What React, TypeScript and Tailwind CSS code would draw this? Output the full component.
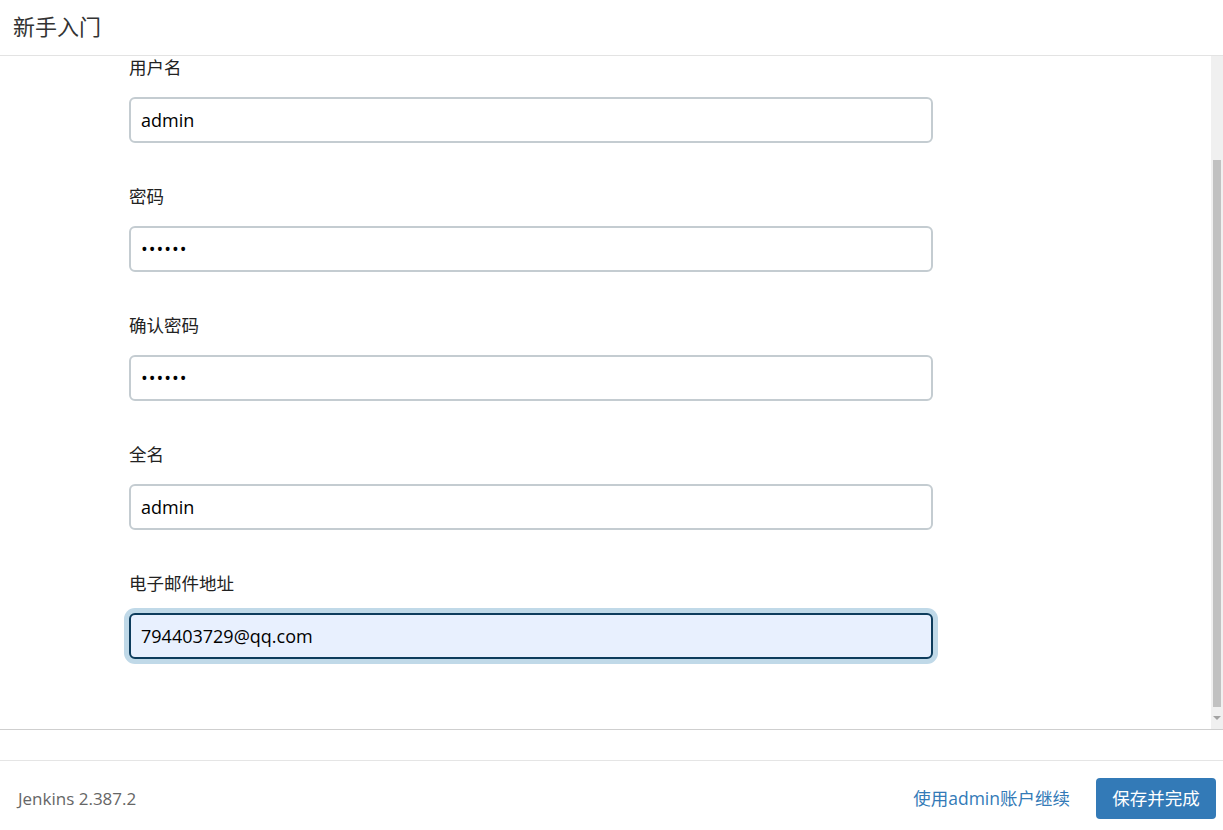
import React from "react";

const fields = [
  { label: "用户名", value: "admin", type: "text" },
  { label: "密码", value: "••••••", type: "password" },
  { label: "确认密码", value: "••••••", type: "password" },
  { label: "全名", value: "admin", type: "text" },
  { label: "电子邮件地址", value: "794403729@qq.com", type: "email", focused: true },
];

const font = "font-['Segoe_UI','Open_Sans','Noto_Sans_CJK_SC',sans-serif]";

const Field = ({
  label,
  value,
  type,
  focused,
}: {
  label: string;
  value: string;
  type: string;
  focused?: boolean;
}) => {
  return (
    <div className="mb-[42px]">
      <div className="text-[17.5px] leading-[22px] text-[#222] mb-[19px]">{label}</div>
      <div
        className={
          focused
            ? "w-[804px] h-[46px] rounded-[6px] border-2 border-[#0d3c5c] bg-[#e8f0fe] flex items-center px-[10px] shadow-[0_0_0_5px_#c0d9e8]"
            : "w-[804px] h-[46px] rounded-[6px] border-2 border-[#c4ccd1] bg-white flex items-center px-[10px]"
        }
      >
        {type === "password" ? (
          <span className="text-[18px] text-black tracking-[1px] leading-none">{value}</span>
        ) : (
          <span className="text-[18px] text-black">{value}</span>
        )}
      </div>
    </div>
  );
};

export default function App() {
  return (
    <div className={`w-[1223px] h-[830px] bg-white flex flex-col overflow-hidden ${font}`}>
      <div className="h-[56px] shrink-0 border-b border-[#e3e3e3] flex items-center pl-[13px] pb-[2px]">
        <h1 className="text-[22px] text-[#333]">新手入门</h1>
      </div>

      <div className="h-[673px] shrink-0 flex">
        <div className="flex-1 pl-[129px] overflow-hidden">
          {fields.map((f) => (
            <Field key={f.label} {...f} />
          ))}
        </div>
        <div className="w-[12px] bg-[#f0f0f0] flex flex-col">
          <div className="h-[104px]" />
          <div className="h-[547px] mx-[2px] bg-[#c1c1c1]" />
          <div className="flex-1 flex items-center justify-center">
            <div className="w-0 h-0 border-l-[4px] border-r-[4px] border-t-[4px] border-l-transparent border-r-transparent border-t-[#a3a3a3]" />
          </div>
        </div>
      </div>

      <div className="h-[31px] shrink-0 border-t border-[#cfcfcf]" />

      <div className="flex-1 border-t border-[#e5e5e5] flex items-center justify-between pl-[18px] pr-[7px] pt-[6px]">
        <span className="text-[17px] text-[#666]">Jenkins 2.387.2</span>
        <div className="flex items-center gap-[26px]">
          <span className="text-[17.5px] text-[#337ab7]">使用admin账户继续</span>
          <button className="h-[41px] w-[120px] rounded-[4px] bg-[#337ab7] text-white text-[17.5px]">
            保存并完成
          </button>
        </div>
      </div>
    </div>
  );
}
